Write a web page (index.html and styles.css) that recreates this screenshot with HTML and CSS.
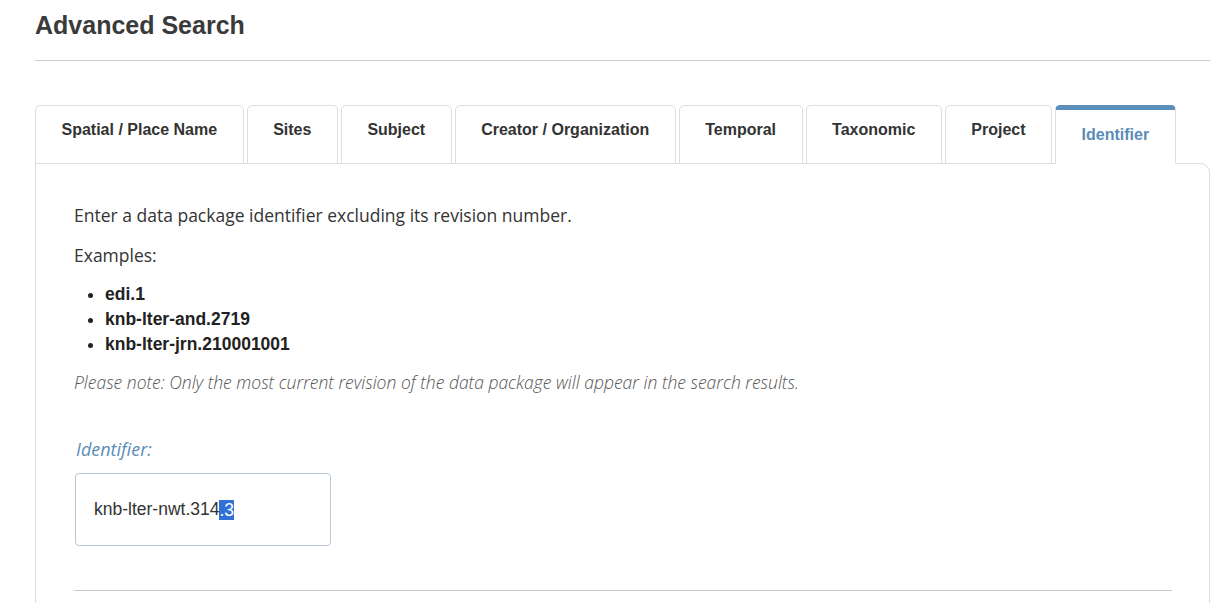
FILE: index.html
```html
<!DOCTYPE html>
<html lang="en">
<head>
<meta charset="utf-8">
<title>Advanced Search</title>
<link rel="stylesheet" href="styles.css">
</head>
<body>
<div class="page">
  <h1 class="title">Advanced Search</h1>
  <hr class="title-rule">
  <div class="tabs">
    <div class="tab">Spatial / Place Name</div>
    <div class="tab">Sites</div>
    <div class="tab">Subject</div>
    <div class="tab">Creator / Organization</div>
    <div class="tab">Temporal</div>
    <div class="tab">Taxonomic</div>
    <div class="tab">Project</div>
    <div class="tab active">Identifier</div>
  </div>
  <div class="panel">
    <p class="intro">Enter a data package identifier excluding its revision number.</p>
    <p class="intro">Examples:</p>
    <ul class="examples">
      <li>edi.1</li>
      <li>knb-lter-and.2719</li>
      <li>knb-lter-jrn.210001001</li>
    </ul>
    <p class="note">Please note: Only the most current revision of the data package will appear in the search results.</p>
    <label class="field-label">Identifier:</label>
    <div class="field-input">knb-lter-nwt.314<span class="sel">.3</span></div>
    <hr class="panel-rule">
  </div>
</div>
</body>
</html>
```

FILE: styles.css
```css
html, body {
  margin: 0;
  padding: 0;
  background: #ffffff;
}

.page {
  padding: 0 10px 0 35px;
  font-family: "Liberation Sans", Arial, sans-serif;
  color: #333333;
}

.title {
  margin: 0;
  padding-top: 11px;
  font-size: 25px;
  line-height: 28px;
  font-weight: bold;
  color: #3a3a3a;
}

.title-rule {
  margin: 21px 0 0 0;
  border: 0;
  border-top: 1px solid #cccccc;
  height: 0;
}

.tabs {
  display: flex;
  gap: 3px;
  margin-top: 44px;
  position: relative;
  z-index: 1;
  margin-bottom: -1px;
}

.tab {
  box-sizing: border-box;
  height: 59px;
  padding: 14px 25.5px 0 25.5px;
  font-size: 16px;
  line-height: 20px;
  font-weight: bold;
  color: #333333;
  background: #ffffff;
  border: 1px solid #dddddd;
  border-top-left-radius: 5px;
  border-top-right-radius: 5px;
  text-align: center;
  white-space: nowrap;
}

.tab.active {
  padding-top: 15px;
  border-top: 5px solid #5a8ebb;
  border-bottom-color: #ffffff;
  color: #5b8cb8;
}

.panel {
  border: 1px solid #dddddd;
  border-top-right-radius: 10px;
  padding: 39px 37px 0 38px;
  min-height: 500px;
}

.intro {
  margin: 0;
  font-family: "Open Sans", sans-serif;
  font-size: 17.5px;
  line-height: 24px;
  color: #333333;
}

.intro + .intro {
  margin-top: 16px;
}

.examples {
  margin: 15px 0 13px 0;
  padding-left: 31px;
  font-family: "Liberation Sans", Arial, sans-serif;
  font-weight: bold;
  font-size: 17.5px;
  line-height: 25px;
  color: #222222;
}

.note {
  margin: 0;
  font-family: "Open Sans", sans-serif;
  font-style: italic;
  font-weight: 300;
  font-size: 17.5px;
  line-height: 24px;
  color: #555555;
}

.field-label {
  display: block;
  margin: 43px 0 0 2px;
  font-family: "Open Sans", sans-serif;
  font-style: italic;
  font-size: 18px;
  line-height: 24px;
  color: #5b8cb8;
}

.field-input {
  box-sizing: border-box;
  width: 256px;
  height: 73px;
  margin: 12px 0 0 1px;
  padding: 0 18px;
  display: flex;
  align-items: center;
  border: 1px solid #b7c8da;
  border-radius: 4px;
  font-family: "Liberation Sans", Arial, sans-serif;
  font-size: 17.5px;
  color: #333333;
}

.sel {
  background: #3370d4;
  color: #ffffff;
  line-height: 20px;
}

.panel-rule {
  margin: 44px 0 0 0;
  border: 0;
  border-top: 1px solid #cccccc;
  height: 0;
}
```
